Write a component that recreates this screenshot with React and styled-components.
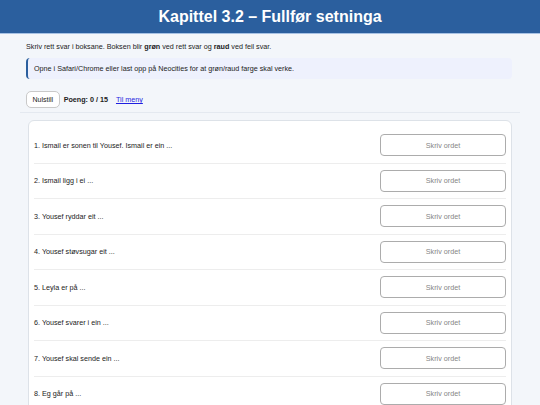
import styled, { createGlobalStyle } from "styled-components";

const GlobalStyle = createGlobalStyle`
  html, body {
    margin: 0;
    padding: 0;
    background: #f3f6fa;
    font-family: "Liberation Sans", Arial, sans-serif;
    color: #222;
  }
`;

const Header = styled.header`
  height: 33px;
  background: #2b5f9e;
  border-bottom: 1px solid #a7c2e4;
  display: flex;
  align-items: center;
  justify-content: center;
`;

const Title = styled.h1`
  margin: 0;
  font-size: 16px;
  font-weight: bold;
  color: #fff;
`;

const Main = styled.main`
  width: 500px;
  margin: 0 auto;
  padding: 0 8px 0 6px;
  box-sizing: border-box;
`;

const Intro = styled.p`
  margin: 9px 0 0;
  font-size: 7.2px;
  line-height: 8px;
`;

const Notice = styled.div`
  margin-top: 7px;
  height: 21px;
  display: flex;
  align-items: center;
  padding-left: 6px;
  background: #eef1fd;
  border-left: 2px solid #2b5f9e;
  border-radius: 4px;
  font-size: 7.2px;
`;

const Toolbar = styled.div`
  margin-top: 12px;
  display: flex;
  align-items: center;
  gap: 4px;
  font-size: 7.2px;
`;

const ResetButton = styled.button`
  height: 17px;
  padding: 0 5.5px;
  background: #fff;
  border: 1px solid #c9c9c9;
  border-radius: 5px;
  font-family: inherit;
  font-size: 7px;
  color: #222;
`;

const Score = styled.strong`
  font-weight: bold;
`;

const MenuLink = styled.a`
  margin-left: 4px;
  color: #1f1fe0;
  text-decoration: underline;
`;

const Rule = styled.div`
  height: 1px;
  margin: 4px -8px 0 -6px;
  background: #e4e9f0;
`;

const Card = styled.section`
  margin: 7px 0 0 2px;
  padding: 7px 5px;
  background: #fff;
  border: 1px solid #dde2e8;
  border-radius: 6px;
`;

const Row = styled.div`
  display: flex;
  align-items: center;
  justify-content: space-between;
  padding: 6.25px 0;
  border-bottom: 1px solid #ededed;
  font-size: 7.2px;
`;

const AnswerInput = styled.input`
  width: 126px;
  height: 22px;
  box-sizing: border-box;
  border: 1px solid #acacac;
  border-radius: 4px;
  background: #fff;
  text-align: center;
  font-family: inherit;
  font-size: 7.2px;
  &::placeholder {
    color: #858585;
  }
`;

const questions = [
  "Ismail er sonen til Yousef. Ismail er ein ...",
  "Ismail ligg i ei ...",
  "Yousef ryddar eit ...",
  "Yousef støvsugar eit ...",
  "Leyla er på ...",
  "Yousef svarer i ein ...",
  "Yousef skal sende ein ...",
  "Eg går på ...",
];

export default function App() {
  return (
    <>
      <GlobalStyle />
      <Header>
        <Title>Kapittel 3.2 – Fullfør setninga</Title>
      </Header>
      <Main>
        <Intro>
          Skriv rett svar i boksane. Boksen blir <b>grøn</b> ved rett svar og{" "}
          <b>raud</b> ved feil svar.
        </Intro>
        <Notice>
          Opne i Safari/Chrome eller last opp på Neocities for at grøn/raud farge skal verke.
        </Notice>
        <Toolbar>
          <ResetButton>Nulstill</ResetButton>
          <Score>Poeng: 0 / 15</Score>
          <MenuLink href="#">Til meny</MenuLink>
        </Toolbar>
        <Rule />
        <Card>
          {questions.map((q, i) => (
            <Row key={i}>
              <span>
                {i + 1}. {q}
              </span>
              <AnswerInput placeholder="Skriv ordet" />
            </Row>
          ))}
        </Card>
      </Main>
    </>
  );
}
